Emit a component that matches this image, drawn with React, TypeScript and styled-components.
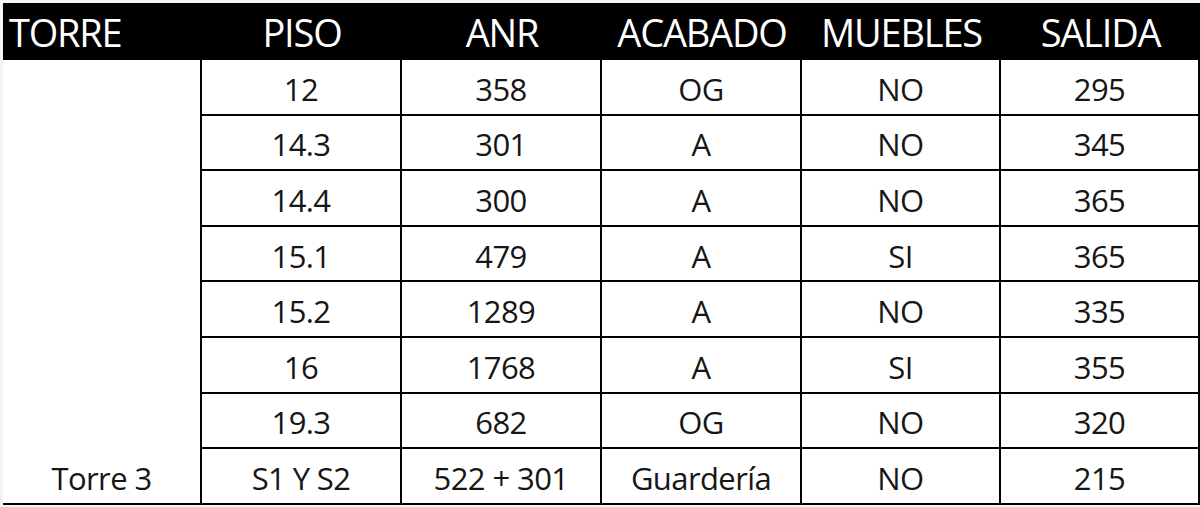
import styled, { createGlobalStyle } from "styled-components";

const GlobalStyle = createGlobalStyle`
  html, body {
    margin: 0;
    padding: 0;
    background: #fff;
  }
  body {
    font-family: "Open Sans", "Noto Sans", sans-serif;
  }
`;

const Page = styled.div`
  width: 1200px;
  height: 507px;
  box-sizing: border-box;
  padding: 3px 0 0 3px;
  background: #f4f4f4;
  overflow: hidden;
`;

const Table = styled.div`
  display: grid;
  grid-template-columns: 199px 200px 200px 200px 199px 199px;
  grid-template-rows: 57px repeat(8, 55.6px);
  background: #fff;
`;

const HeadCell = styled.div<{ $left?: boolean }>`
  background: #000;
  color: #fff;
  font-size: 38px;
  letter-spacing: -1.2px;
  display: flex;
  align-items: center;
  justify-content: ${(p) => (p.$left ? "flex-start" : "center")};
  padding-left: ${(p) => (p.$left ? "6px" : "0")};
  white-space: nowrap;
`;

const Cell = styled.div<{ $lined: boolean }>`
  box-sizing: border-box;
  border-right: 2px solid #000;
  border-bottom: ${(p) => (p.$lined ? "2px solid #000" : "none")};
  display: flex;
  align-items: center;
  justify-content: center;
  padding-top: 4px;
  color: #161616;
  font-size: 31px;
  letter-spacing: -0.6px;
  white-space: nowrap;
`;

const headers = ["TORRE", "PISO", "ANR", "ACABADO", "MUEBLES", "SALIDA"];

const rows: string[][] = [
  ["", "12", "358", "OG", "NO", "295"],
  ["", "14.3", "301", "A", "NO", "345"],
  ["", "14.4", "300", "A", "NO", "365"],
  ["", "15.1", "479", "A", "SI", "365"],
  ["", "15.2", "1289", "A", "NO", "335"],
  ["", "16", "1768", "A", "SI", "355"],
  ["", "19.3", "682", "OG", "NO", "320"],
  ["Torre 3", "S1 Y S2", "522 + 301", "Guardería", "NO", "215"],
];

export default function App() {
  return (
    <>
      <GlobalStyle />
      <Page>
        <Table>
          {headers.map((h, i) => (
            <HeadCell key={h} $left={i === 0}>
              {h}
            </HeadCell>
          ))}
          {rows.map((row, r) =>
            row.map((value, c) => (
              <Cell
                key={`${r}-${c}`}
                $lined={c > 0 || r === rows.length - 1}
              >
                {value}
              </Cell>
            ))
          )}
        </Table>
      </Page>
    </>
  );
}
